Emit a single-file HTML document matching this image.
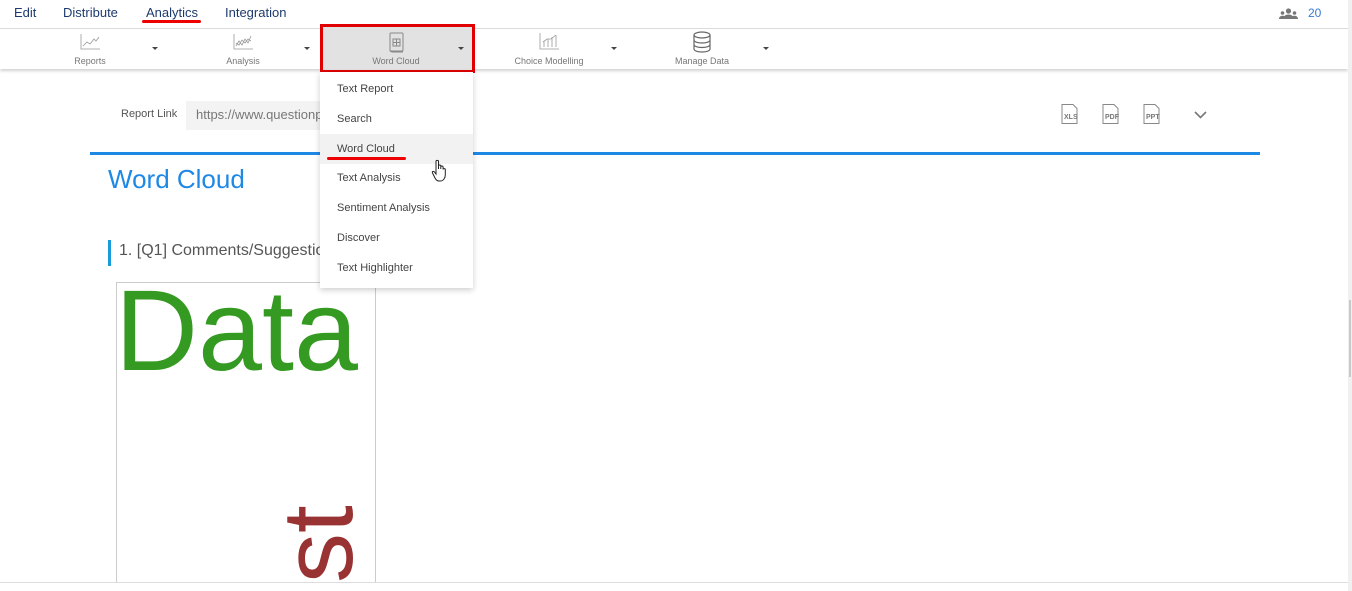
<!DOCTYPE html>
<html><head><meta charset="utf-8"><style>
*{margin:0;padding:0;box-sizing:border-box}
body{width:1352px;height:591px;overflow:hidden;background:#fff;font-family:"Liberation Sans",sans-serif;position:relative}
.a{position:absolute;white-space:nowrap}
.nav{font-size:13px;color:#1d3a6e;top:5px}
.tl{font-size:9px;color:#777;top:56px;text-align:center;width:100px}
.car{position:absolute;width:0;height:0;border-left:3px solid transparent;border-right:3px solid transparent;border-top:3px solid #444}
.mi{position:absolute;left:337px;font-size:11px;color:#444}
</style></head><body>
<div class="a nav" style="left:14px">Edit</div>
<div class="a nav" style="left:63px">Distribute</div>
<div class="a nav" style="left:146px">Analytics</div>
<div class="a" style="left:142px;top:20px;width:59px;height:3px;background:#e00;border-radius:2px"></div>
<div class="a nav" style="left:225px">Integration</div>
<svg class="a" style="left:1279px;top:8px" width="19" height="11" viewBox="0 0 19 11"><circle cx="9.5" cy="3" r="2.6" fill="#777"/><path d="M4.5 11c0-3 2-4.5 5-4.5s5 1.5 5 4.5z" fill="#777"/><circle cx="3.5" cy="5" r="1.8" fill="#777"/><circle cx="15.5" cy="5" r="1.8" fill="#777"/><path d="M0 11c0-2 1.5-3.2 3.5-3.2S7 9 7 11zM12 11c0-2 1.5-3.2 3.5-3.2S19 9 19 11z" fill="#777"/></svg>
<div class="a" style="left:1308px;top:6px;font-size:12px;color:#3a7bd5">20</div>
<div class="a" style="left:0;top:28px;width:1348px;height:1px;background:#ddd"></div>
<div class="a" style="left:0;top:29px;width:1348px;height:40px;background:#fff;box-shadow:0 2px 3px rgba(0,0,0,.18)"></div>
<div class="a" style="left:320px;top:24px;width:155px;height:49px;background:#e2e2e2;border:3px solid #e00000"></div>
<svg class="a" style="left:80px;top:33px" width="21" height="17" viewBox="0 0 21 17" fill="none" stroke="#999" stroke-width=".8"><path d="M1 1v15h19M3 13l4-4 3 2 4-5 2 2 3-4"/></svg>
<svg class="a" style="left:233px;top:33px" width="21" height="17" viewBox="0 0 21 17" fill="none" stroke="#999" stroke-width=".8"><path d="M1 1v15h19M3 13l3-5 3 4 3-6 3 4 3-7M3 10l3 2 3-5 3 3 3-4 3 2"/></svg>
<svg class="a" style="left:388px;top:32px" width="17" height="21" viewBox="0 0 17 21" fill="none" stroke="#888" stroke-width="1"><rect x="2" y="1" width="13" height="18" rx="1"/><rect x="5" y="7" width="7" height="7"/><path d="M8.5 7v7M5 10.5h7M2 19l2 1h11"/></svg>
<svg class="a" style="left:539px;top:32px" width="21" height="18" viewBox="0 0 21 18" fill="none" stroke="#999" stroke-width=".8"><path d="M1 1v16h19M5 15V9M9 15V7M13 15V5M17 15V3M4 10l4-3 4 0 5-4"/></svg>
<svg class="a" style="left:692px;top:31px" width="20" height="22" viewBox="0 0 20 22" fill="none" stroke="#666" stroke-width="1.2"><ellipse cx="10" cy="4" rx="8" ry="3"/><path d="M2 4v14c0 1.7 3.6 3 8 3s8-1.3 8-3V4M2 9c0 1.7 3.6 3 8 3s8-1.3 8-3M2 13.5c0 1.7 3.6 3 8 3s8-1.3 8-3"/></svg>
<div class="a tl" style="left:40px">Reports</div>
<div class="a tl" style="left:193px">Analysis</div>
<div class="a tl" style="left:346px">Word Cloud</div>
<div class="a tl" style="left:499px">Choice Modelling</div>
<div class="a tl" style="left:652px">Manage Data</div>
<div class="car" style="left:152px;top:47px"></div>
<div class="car" style="left:304px;top:47px"></div>
<div class="car" style="left:458px;top:47px"></div>
<div class="car" style="left:611px;top:47px"></div>
<div class="car" style="left:763px;top:47px"></div>

<div class="a" style="left:121px;top:108px;font-size:11px;color:#555">Report Link</div>
<div class="a" style="left:186px;top:101px;width:200px;height:29px;background:#f3f3f3;font-size:13px;color:#777;padding:6px 10px">https://www.questionpro.com</div>
<svg class="a" style="left:1061px;top:104px" width="20" height="20" viewBox="0 0 20 20"><path d="M1 .5h11l4 4v15H1z" fill="#fff" stroke="#888"/><text x="3" y="15" font-size="7" font-weight="bold" fill="#777" font-family="Liberation Sans">XLS</text></svg>
<svg class="a" style="left:1102px;top:104px" width="20" height="20" viewBox="0 0 20 20"><path d="M1 .5h11l4 4v15H1z" fill="#fff" stroke="#888"/><text x="3" y="15" font-size="7" font-weight="bold" fill="#777" font-family="Liberation Sans">PDF</text></svg>
<svg class="a" style="left:1143px;top:104px" width="20" height="20" viewBox="0 0 20 20"><path d="M1 .5h11l4 4v15H1z" fill="#fff" stroke="#888"/><text x="3" y="15" font-size="7" font-weight="bold" fill="#777" font-family="Liberation Sans">PPT</text></svg>
<svg class="a" style="left:1194px;top:111px" width="13" height="8" viewBox="0 0 13 8"><path d="M1 1l5.5 5.5L12 1" fill="none" stroke="#777" stroke-width="1.6"/></svg>
<div class="a" style="left:90px;top:152px;width:1170px;height:3px;background:#1e88e5"></div>
<div class="a" style="left:108px;top:164px;font-size:26px;color:#1e88e5">Word Cloud</div>
<div class="a" style="left:108px;top:240px;width:3px;height:26px;background:#1a9bdb"></div>
<div class="a" style="left:119px;top:242px;font-size:16px;color:#555">1. [Q1] Comments/Suggestions</div>
<div class="a" style="left:116px;top:282px;width:260px;height:300px;border:1px solid #ccc;border-bottom:none;overflow:hidden;background:#fff">
<div class="a" style="left:-2px;top:-18px;font-size:115px;color:#359a22">Data</div>
<div class="a" style="font-size:100px;line-height:115px;color:#993333;transform:rotate(-90deg);transform-origin:0 0;top:300px;left:144px">st</div>
</div>
<div class="a" style="left:320px;top:72px;width:153px;height:216px;background:#fff;box-shadow:0 2px 6px rgba(0,0,0,.2)"></div>
<div class="a" style="left:320px;top:134px;width:153px;height:30px;background:#f2f2f2"></div>
<div class="mi" style="top:83px">Text Report</div>
<div class="mi" style="top:113px">Search</div>
<div class="mi" style="top:143px">Word Cloud</div>
<div class="a" style="left:327px;top:157px;width:79px;height:3px;background:#e00;border-radius:2px"></div>
<div class="mi" style="top:172px">Text Analysis</div>
<div class="mi" style="top:202px">Sentiment Analysis</div>
<div class="mi" style="top:232px">Discover</div>
<div class="mi" style="top:262px">Text Highlighter</div>
<svg class="a" style="left:431px;top:159px" width="18" height="24" viewBox="0 0 18 24"><path d="M5 2.5c0-1.5 2.5-1.5 2.5 0V10l0-3c0-1.3 2.3-1.3 2.3 0v3l0-2c0-1.3 2.3-1.3 2.3 0v2.5c0-1.2 2.2-1.2 2.2 0V16c0 3-2 6-5 6H8c-2 0-3-1-4-3L1.5 14c-.7-1.4 1-2.3 2-1L5 15z" fill="#fff" stroke="#222" stroke-width="1"/></svg>
<div class="a" style="left:0;top:582px;width:1348px;height:1px;background:#ddd"></div>
<div class="a" style="left:1348px;top:0;width:4px;height:591px;background:#f0f0f0"></div>
<div class="a" style="left:1349px;top:300px;width:2px;height:77px;background:#c8c8c8"></div>
</body></html>
